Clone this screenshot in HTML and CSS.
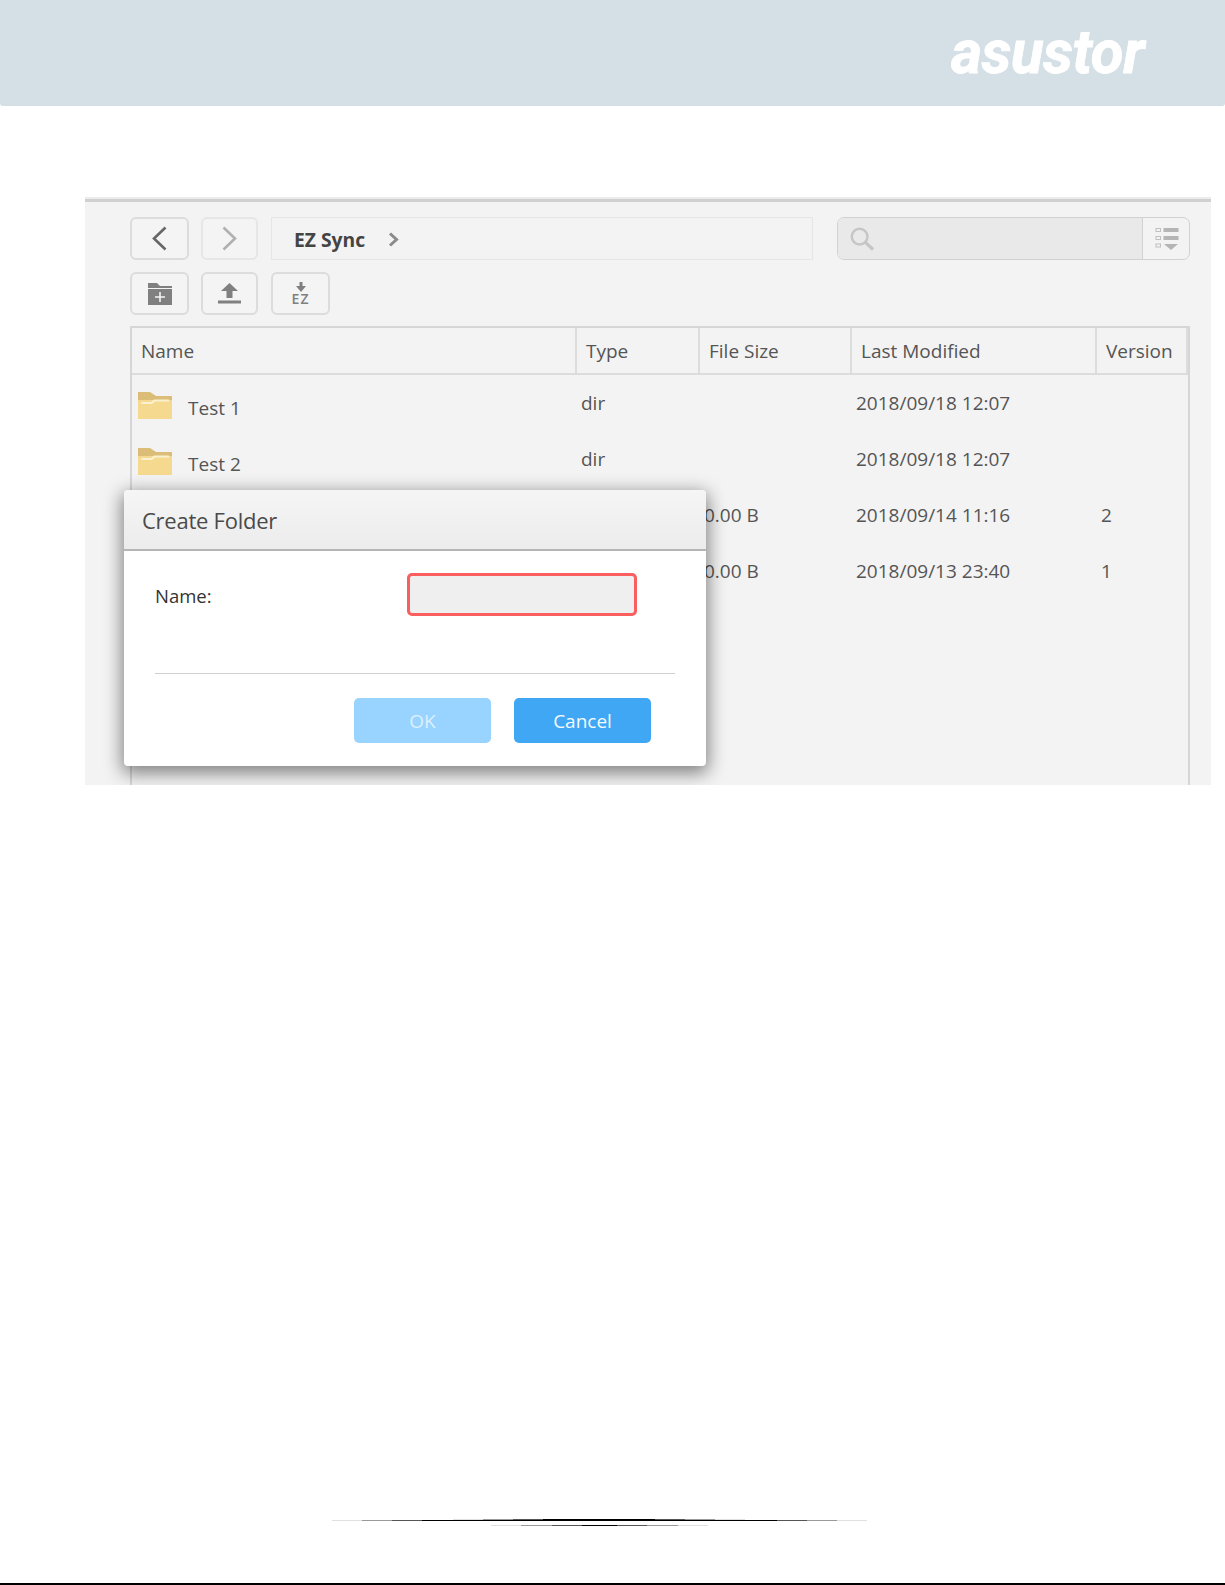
FILE: index.html
```html
<!DOCTYPE html>
<html lang="en">
<head>
<meta charset="utf-8">
<title>Create Folder</title>
<link rel="stylesheet" href="styles.css">
</head>
<body>
<header class="banner"><span class="logo">asustor</span></header>
<section class="shot">
  <div class="toolbar">
    <button class="tool tool-back"><svg width="15" height="25" viewBox="0 0 15 25"><polyline points="13.5,1.5 2,12.5 13.5,23.5" fill="none" stroke="#666" stroke-width="2.6"/></svg></button>
    <button class="tool tool-fwd"><svg width="15" height="25" viewBox="0 0 15 25"><polyline points="1.5,1.5 13,12.5 1.5,23.5" fill="none" stroke="#b0b0b0" stroke-width="2.6"/></svg></button>
    <div class="crumb"><b>EZ Sync</b><svg width="11" height="15" viewBox="0 0 11 15"><polyline points="2,1.5 8.5,7.5 2,13.5" fill="none" stroke="#8a8a8a" stroke-width="3"/></svg></div>
    <div class="search">
      <div class="search-field"><svg width="25" height="24" viewBox="0 0 26 25"><circle cx="10" cy="10" r="8.2" fill="none" stroke="#c6c6c6" stroke-width="2.6"/><line x1="16" y1="16" x2="24" y2="23.5" stroke="#c6c6c6" stroke-width="3.4"/></svg></div>
      <div class="search-menu"><svg width="24" height="24" viewBox="0 0 24 24" fill="#b5b5b5"><rect x="8.5" y="1" width="15" height="4"/><rect x="8.5" y="9" width="15" height="4"/><path d="M9 17h14l-7 6z"/><g fill="none" stroke="#c0c0c0"><rect x="1" y="1.5" width="4.5" height="3"/><rect x="1" y="9.5" width="4.5" height="3"/><rect x="1" y="17" width="4.5" height="3"/></g></svg></div>
    </div>
  </div>
  <div class="toolbar toolbar-second">
    <button class="tool tool-back"><svg width="24" height="24" viewBox="0 0 24 24"><path d="M0 1h9l3 3h12v2H0z" fill="#808080"/><path d="M0 7h24v16H0z" fill="#808080"/><path d="M12 10v10M7 15h10" stroke="#f3f3f3" stroke-width="1.6"/></svg></button>
    <button class="tool tool-fwd tool-solid"><svg width="23" height="21" viewBox="0 0 23 21"><path d="M11.5 0l8.500 8h-5.500v7h-6V8H3z" fill="#808080"/><rect y="17.500" width="23" height="3" fill="#808080"/></svg></button>
    <button class="tool tool-ez"><svg width="10" height="10" viewBox="0 0 10 10"><path d="M3.500 0h3v4H10L5 10 0 4h3.500z" fill="#808080"/></svg><span>EZ</span></button>
  </div>
  <div class="files">
    <div class="row row-head">
      <span class="col">Name</span><span class="col">Type</span><span class="col">File Size</span><span class="col">Last Modified</span><span class="col col-last">Version</span>
    </div>
    <div class="row row-file">
      <span class="name"><svg class="folder" width="34" height="27" viewBox="0 0 34 27"><path d="M0 0h12l6 4h16v23H0z" fill="#dcbd77"/><path d="M0 8h34v19H0z" fill="#f5d98f"/><path d="M3 10h10l3-2.500h15v2H17l-3 2.500H3z" fill="#fbf0d0"/></svg>Test 1</span><span class="cell">dir</span><span class="cell"></span><span class="cell">2018/09/18 12:07</span><span class="cell"></span>
    </div>
    <div class="row row-file">
      <span class="name"><svg class="folder" width="34" height="27" viewBox="0 0 34 27"><path d="M0 0h12l6 4h16v23H0z" fill="#dcbd77"/><path d="M0 8h34v19H0z" fill="#f5d98f"/><path d="M3 10h10l3-2.500h15v2H17l-3 2.500H3z" fill="#fbf0d0"/></svg>Test 2</span><span class="cell">dir</span><span class="cell"></span><span class="cell">2018/09/18 12:07</span><span class="cell"></span>
    </div>
    <div class="row row-file">
      <span class="name"><svg class="folder" width="22" height="26" viewBox="0 0 22 26"><path d="M1 1h14l6 6v18H1z" fill="#fff" stroke="#999"/></svg></span><span class="cell">txt</span><span class="cell">0.00 B</span><span class="cell">2018/09/14 11:16</span><span class="cell">2</span>
    </div>
    <div class="row row-file">
      <span class="name"></span><span class="cell">txt</span><span class="cell">0.00 B</span><span class="cell">2018/09/13 23:40</span><span class="cell">1</span>
    </div>
  </div>
  <div class="dialog">
    <div class="dialog-title">Create Folder</div>
    <div class="dialog-body">
      <div class="field"><label class="field-label">Name:</label><div class="field-input"></div></div>
      <div class="dialog-rule"></div>
      <div class="dialog-actions"><button class="btn btn-off">OK</button><button class="btn">Cancel</button></div>
    </div>
  </div>
</section>
<footer class="foot">
  <div class="foot-line foot-line-long"></div>
  <div class="foot-line foot-line-short"></div>
</footer>
</body>
</html>
```
FILE: styles.css
```css
* { box-sizing: border-box; }
html, body { margin: 0; padding: 0; }
body {
  width: 1225px;
  height: 1585px;
  background: #fff;
  font-family: "Open Sans", "Noto Sans", sans-serif;
  color: #555;
  display: flex;
  flex-direction: column;
  overflow: hidden;
}
.banner {
  height: 106px;
  background: #d4dfe6;
  border-radius: 0 0 3px 3px;
  display: flex;
  justify-content: flex-end;
  align-items: flex-start;
  padding: 19px 81px 0 0;
  flex: none;
}
.logo {
  font-family: "Roboto", sans-serif;
  font-weight: 700;
  font-style: italic;
  font-size: 60px;
  line-height: 68px;
  color: #fff;
  letter-spacing: -0.5px;
  -webkit-text-stroke: 0.8px #fff;
}
.shot {
  position: relative;
  flex: none;
  margin: 93px 0 0 85px;
  width: 1126px;
  height: 586px;
  background: #f3f3f3;
  border-top: 3px solid #d0d0d0;
  box-shadow: 0 -2px 0 #ececec;
  padding: 15px 21px 0 45px;
  overflow: hidden;
}
.toolbar { display: flex; height: 43px; }
.toolbar-second { margin-top: 12px; }
.tool {
  height: 43px;
  background: #f4f4f4;
  border: 2px solid #dcdcdc;
  border-radius: 6px;
  padding: 0;
  display: flex;
  align-items: center;
  justify-content: center;
}
.tool-back { width: 59px; }
.tool-fwd { width: 57px; margin-left: 12px; border-color: #e6e6e6; }
.tool-solid { border-color: #dcdcdc; }
.tool-ez {
  width: 59px;
  margin-left: 13px;
  flex-direction: column;
  gap: 0;
  color: #808080;
  font-family: "Open Sans", sans-serif;
  font-size: 14px;
  font-weight: 600;
  line-height: 13px;
  letter-spacing: 1px;
}
.crumb {
  width: 542px;
  margin-left: 13px;
  border: 1px solid #e6e6e6;
  background: #f3f3f3;
  display: flex;
  align-items: center;
  padding: 2px 0 0 22px;
  gap: 23px;
  font-size: 19.300px;
  color: #444;
}
.crumb b { font-weight: 700; }
.search {
  width: 353px;
  margin-left: 24px;
  border: 1px solid #d2d2d2;
  border-radius: 7px;
  display: flex;
  overflow: hidden;
}
.search-field {
  flex: 1;
  background: #e9e9e9;
  border-right: 1px solid #d2d2d2;
  display: flex;
  align-items: center;
  padding-left: 12px;
}
.search-menu {
  width: 46px;
  display: flex;
  align-items: center;
  justify-content: center;
  padding-left: 1px;
}
.files {
  margin-top: 11px;
  width: 1060px;
  height: 500px;
  border: solid #d6d6d6;
  border-width: 2px 2px 0 2px;
}
.row {
  display: grid;
  grid-template-columns: 445px 123px 152px 245px 1fr;
}
.row-head {
  height: 47px;
  border-bottom: 2px solid #dcdcdc;
  font-size: 19px;
  line-height: 47px;
}
.col { padding-left: 9px; border-right: 2px solid #dcdcdc; }
.col-last { padding-left: 9px; border-right-width: 2px; }
.row-file {
  height: 56px;
  font-size: 19px;
  line-height: 24px;
}
.cell { padding: 16px 0 0 4px; }
.name {
  display: flex;
  align-items: flex-start;
  padding: 18px 0 0 6px;
  gap: 16px;
  line-height: 30px;
}
.folder { flex: none; margin-top: -1px; }
.dialog {
  position: absolute;
  left: 39px;
  top: 288px;
  width: 582px;
  height: 276px;
  background: #fff;
  border-radius: 4px;
  box-shadow: 0 5px 18px 2px rgba(0, 0, 0, 0.48);
  display: flex;
  flex-direction: column;
}
.dialog-title {
  height: 61px;
  flex: none;
  background: linear-gradient(#f5f5f5f2, #ebebebf5);
  border-bottom: 2px solid #b5b5b5;
  border-radius: 4px 4px 0 0;
  padding-left: 18px;
  font-size: 22px;
  letter-spacing: -0.25px;
  line-height: 60px;
  color: #4a4a4a;
}
.dialog-body { padding: 22px 31px 0; flex: 1; display: flex; flex-direction: column; }
.field { display: flex; height: 43px; }
.field-label { width: 252px; padding-top: 11px; font-size: 18.500px; line-height: 24px; color: #333; }
.field-input {
  width: 230px;
  height: 43px;
  background: #efefef;
  border: 3px solid #fa5f5f;
  border-radius: 5px;
}
.dialog-rule { margin-top: 57px; height: 1px; background: #d0d0d0; }
.dialog-actions { display: flex; gap: 23px; margin: 24px 0 0 199px; }
.btn {
  width: 137px;
  height: 45px;
  border: 0;
  border-radius: 5px;
  background: #3fa7f3;
  color: #f4fbff;
  font-family: "Open Sans", sans-serif;
  font-size: 19px;
}
.btn-off { background: #99d3ff; color: #dcf0ff; }
.foot {
  margin-top: auto;
  height: 66px;
  border-bottom: 2px solid #000;
  display: flex;
  flex-direction: column;
  align-items: center;
  padding-right: 26px;
  flex: none;
}
.foot-line { height: 1px; }
.foot-line-long {
  width: 535px;
  height: 3px;
  background:
    linear-gradient(90deg, #e0e0e0 5.6%, #999 5.6%, #999 11.2%, #555 11.2%, #555 16.800%, #000 16.800%, #000 83.200%, #555 83.200%, #555 88.800%, #999 88.800%, #999 94.400%, #e0e0e0 94.400%) 0 1px / 100% 1px no-repeat,
    linear-gradient(90deg, transparent 22.600%, #e0e0e0 22.600%, #e0e0e0 28.200%, #999 28.200%, #999 33.800%, #555 33.800%, #555 39.500%, #000 39.500%, #000 60.300%, #555 60.300%, #555 66%, #999 66%, #999 71.500%, #e0e0e0 71.500%, #e0e0e0 77.200%, transparent 77.200%) 0 0 / 100% 1px no-repeat;
}
.foot-line-short {
  margin-top: 3px;
  width: 217px;
  background: linear-gradient(90deg, #e0e0e0 14%, #999 14%, #999 28%, #555 28%, #555 42%, #000 42%, #000 58%, #555 58%, #555 72%, #999 72%, #999 86%, #e0e0e0 86%);
}
```
